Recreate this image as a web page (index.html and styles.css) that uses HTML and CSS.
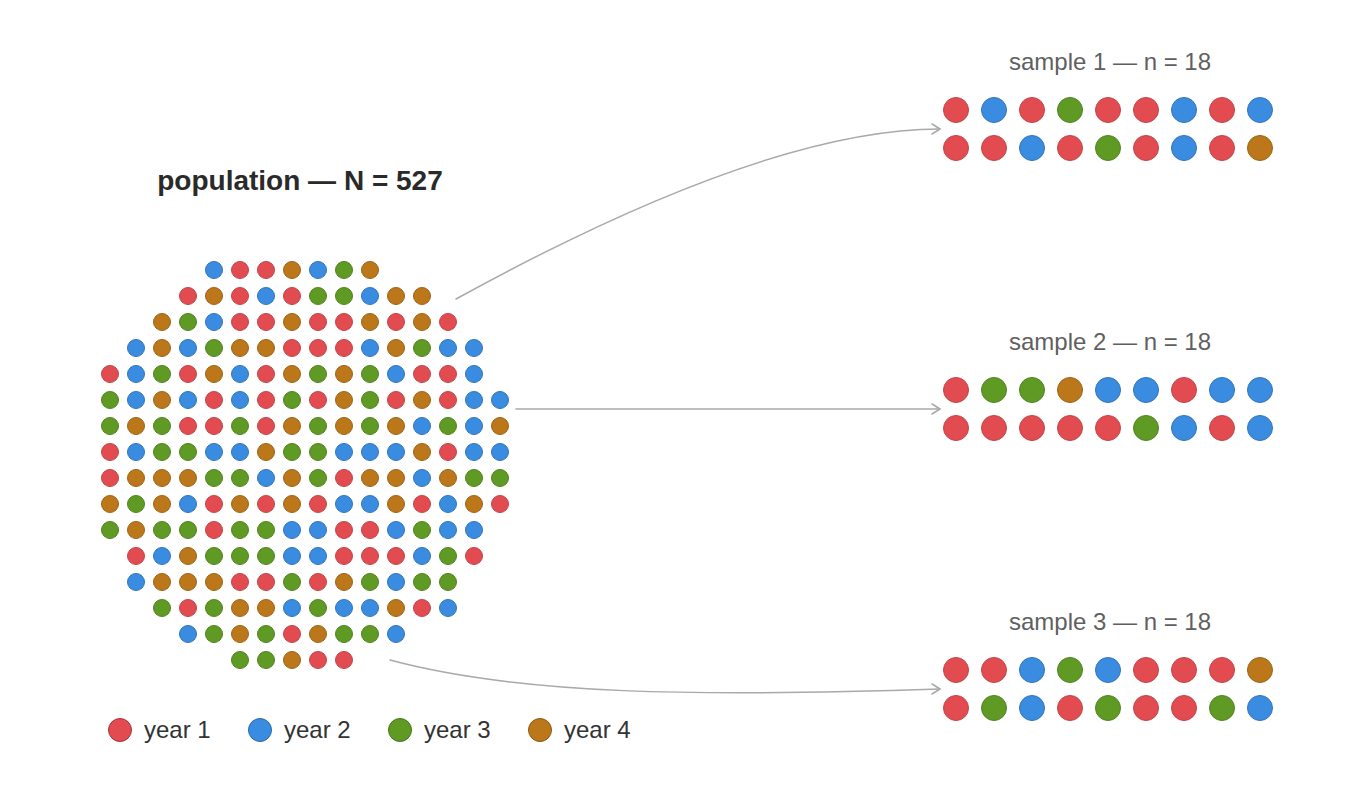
FILE: index.html
```html
<!DOCTYPE html>
<html lang="en">
<head>
<meta charset="utf-8">
<title>Sampling from a population</title>
<link rel="stylesheet" href="styles.css">
</head>
<body>
<div class="stage">
  <section class="left">
    <h1 class="title">population — N = 527</h1>
    <div class="pop">
      <div class="row o4"><i class="d y2"></i><i class="d y1"></i><i class="d y1"></i><i class="d y4"></i><i class="d y2"></i><i class="d y3"></i><i class="d y4"></i></div>
      <div class="row o3"><i class="d y1"></i><i class="d y4"></i><i class="d y1"></i><i class="d y2"></i><i class="d y1"></i><i class="d y3"></i><i class="d y3"></i><i class="d y2"></i><i class="d y4"></i><i class="d y4"></i></div>
      <div class="row o2"><i class="d y4"></i><i class="d y3"></i><i class="d y2"></i><i class="d y1"></i><i class="d y1"></i><i class="d y4"></i><i class="d y1"></i><i class="d y1"></i><i class="d y4"></i><i class="d y1"></i><i class="d y4"></i><i class="d y1"></i></div>
      <div class="row o1"><i class="d y2"></i><i class="d y4"></i><i class="d y2"></i><i class="d y3"></i><i class="d y4"></i><i class="d y4"></i><i class="d y1"></i><i class="d y1"></i><i class="d y1"></i><i class="d y2"></i><i class="d y4"></i><i class="d y3"></i><i class="d y2"></i><i class="d y2"></i></div>
      <div class="row"><i class="d y1"></i><i class="d y2"></i><i class="d y3"></i><i class="d y1"></i><i class="d y4"></i><i class="d y2"></i><i class="d y1"></i><i class="d y4"></i><i class="d y3"></i><i class="d y4"></i><i class="d y3"></i><i class="d y2"></i><i class="d y1"></i><i class="d y1"></i><i class="d y2"></i></div>
      <div class="row"><i class="d y3"></i><i class="d y2"></i><i class="d y4"></i><i class="d y2"></i><i class="d y1"></i><i class="d y2"></i><i class="d y1"></i><i class="d y3"></i><i class="d y1"></i><i class="d y4"></i><i class="d y3"></i><i class="d y1"></i><i class="d y4"></i><i class="d y1"></i><i class="d y2"></i><i class="d y2"></i></div>
      <div class="row"><i class="d y3"></i><i class="d y4"></i><i class="d y3"></i><i class="d y1"></i><i class="d y1"></i><i class="d y3"></i><i class="d y1"></i><i class="d y4"></i><i class="d y3"></i><i class="d y4"></i><i class="d y3"></i><i class="d y4"></i><i class="d y2"></i><i class="d y3"></i><i class="d y2"></i><i class="d y4"></i></div>
      <div class="row"><i class="d y1"></i><i class="d y2"></i><i class="d y3"></i><i class="d y3"></i><i class="d y2"></i><i class="d y2"></i><i class="d y4"></i><i class="d y3"></i><i class="d y3"></i><i class="d y2"></i><i class="d y2"></i><i class="d y2"></i><i class="d y4"></i><i class="d y1"></i><i class="d y2"></i><i class="d y2"></i></div>
      <div class="row"><i class="d y1"></i><i class="d y4"></i><i class="d y4"></i><i class="d y4"></i><i class="d y3"></i><i class="d y3"></i><i class="d y2"></i><i class="d y4"></i><i class="d y3"></i><i class="d y1"></i><i class="d y4"></i><i class="d y4"></i><i class="d y2"></i><i class="d y4"></i><i class="d y3"></i><i class="d y3"></i></div>
      <div class="row"><i class="d y4"></i><i class="d y3"></i><i class="d y4"></i><i class="d y2"></i><i class="d y1"></i><i class="d y4"></i><i class="d y1"></i><i class="d y4"></i><i class="d y1"></i><i class="d y2"></i><i class="d y2"></i><i class="d y4"></i><i class="d y1"></i><i class="d y2"></i><i class="d y4"></i><i class="d y1"></i></div>
      <div class="row"><i class="d y3"></i><i class="d y4"></i><i class="d y3"></i><i class="d y3"></i><i class="d y1"></i><i class="d y3"></i><i class="d y3"></i><i class="d y2"></i><i class="d y2"></i><i class="d y1"></i><i class="d y1"></i><i class="d y2"></i><i class="d y3"></i><i class="d y2"></i><i class="d y2"></i></div>
      <div class="row o1"><i class="d y1"></i><i class="d y2"></i><i class="d y4"></i><i class="d y3"></i><i class="d y3"></i><i class="d y3"></i><i class="d y2"></i><i class="d y2"></i><i class="d y1"></i><i class="d y1"></i><i class="d y1"></i><i class="d y2"></i><i class="d y3"></i><i class="d y1"></i></div>
      <div class="row o1"><i class="d y2"></i><i class="d y4"></i><i class="d y4"></i><i class="d y4"></i><i class="d y1"></i><i class="d y1"></i><i class="d y3"></i><i class="d y1"></i><i class="d y4"></i><i class="d y3"></i><i class="d y2"></i><i class="d y3"></i><i class="d y3"></i></div>
      <div class="row o2"><i class="d y3"></i><i class="d y1"></i><i class="d y3"></i><i class="d y4"></i><i class="d y4"></i><i class="d y2"></i><i class="d y3"></i><i class="d y2"></i><i class="d y2"></i><i class="d y4"></i><i class="d y1"></i><i class="d y2"></i></div>
      <div class="row o3"><i class="d y2"></i><i class="d y3"></i><i class="d y4"></i><i class="d y3"></i><i class="d y1"></i><i class="d y4"></i><i class="d y3"></i><i class="d y3"></i><i class="d y2"></i></div>
      <div class="row o5"><i class="d y3"></i><i class="d y3"></i><i class="d y4"></i><i class="d y1"></i><i class="d y1"></i></div>
    </div>
    <ul class="legend">
      <li class="item"><i class="key y1"></i><span>year 1</span></li>
      <li class="item"><i class="key y2"></i><span>year 2</span></li>
      <li class="item"><i class="key y3"></i><span>year 3</span></li>
      <li class="item"><i class="key y4"></i><span>year 4</span></li>
    </ul>
  </section>

  <section class="right">
    <div class="sample">
      <h2 class="stitle">sample 1 — n = 18</h2>
      <div class="sgrid">
        <i class="s y1"></i><i class="s y2"></i><i class="s y1"></i><i class="s y3"></i><i class="s y1"></i><i class="s y1"></i><i class="s y2"></i><i class="s y1"></i><i class="s y2"></i>
        <i class="s y1"></i><i class="s y1"></i><i class="s y2"></i><i class="s y1"></i><i class="s y3"></i><i class="s y1"></i><i class="s y2"></i><i class="s y1"></i><i class="s y4"></i>
      </div>
    </div>
    <div class="sample">
      <h2 class="stitle">sample 2 — n = 18</h2>
      <div class="sgrid">
        <i class="s y1"></i><i class="s y3"></i><i class="s y3"></i><i class="s y4"></i><i class="s y2"></i><i class="s y2"></i><i class="s y1"></i><i class="s y2"></i><i class="s y2"></i>
        <i class="s y1"></i><i class="s y1"></i><i class="s y1"></i><i class="s y1"></i><i class="s y1"></i><i class="s y3"></i><i class="s y2"></i><i class="s y1"></i><i class="s y2"></i>
      </div>
    </div>
    <div class="sample">
      <h2 class="stitle">sample 3 — n = 18</h2>
      <div class="sgrid">
        <i class="s y1"></i><i class="s y1"></i><i class="s y2"></i><i class="s y3"></i><i class="s y2"></i><i class="s y1"></i><i class="s y1"></i><i class="s y1"></i><i class="s y4"></i>
        <i class="s y1"></i><i class="s y3"></i><i class="s y2"></i><i class="s y1"></i><i class="s y3"></i><i class="s y1"></i><i class="s y1"></i><i class="s y3"></i><i class="s y2"></i>
      </div>
    </div>
  </section>

  <svg class="arrows" width="1360" height="800" viewBox="0 0 1360 800" aria-hidden="true">
    <g class="link">
      <path d="M456 299 Q765 129 940 129"/>
      <path d="M932 124 L940 129 L932 134"/>
      <path d="M516 409 L940 409"/>
      <path d="M932 404 L940 409 L932 414"/>
      <path d="M390 660 C520 695 700 697 940 689"/>
      <path d="M932 684 L940 689 L932 694"/>
    </g>
  </svg>
</div>
</body>
</html>
```

FILE: styles.css
```css
html, body {
  margin: 0;
  padding: 0;
  background: #ffffff;
}

body {
  font-family: "Liberation Sans", Arial, sans-serif;
  color: #222;
}

.stage {
  position: relative;
  width: 1360px;
  height: 800px;
  display: flex;
  overflow: hidden;
}

/* ---------- population ---------- */
.left {
  display: flex;
  flex-direction: column;
  padding-left: 101px;
  padding-top: 165px;
}

.title {
  margin: 0;
  width: 398px;
  text-align: center;
  font-size: 28px;
  line-height: 32px;
  font-weight: 700;
  color: #2a2a2a;
}

.pop {
  margin-top: 64px;
  display: flex;
  flex-direction: column;
  gap: 8px;
}

.row {
  display: flex;
  gap: 8px;
}

.o1 { margin-left: 26px; }
.o2 { margin-left: 52px; }
.o3 { margin-left: 78px; }
.o4 { margin-left: 104px; }
.o5 { margin-left: 130px; }

.d,
.s,
.key {
  display: block;
  border-radius: 50%;
  box-sizing: border-box;
  border-style: solid;
  border-width: 1px;
}

.d { width: 18px; height: 18px; }
.s { width: 26px; height: 26px; }
.key { width: 24px; height: 24px; border-width: 1.5px; }

.y1 { background: #e24b4f; border-color: #bf464a; }
.y2 { background: #3a8ce0; border-color: #3474ba; }
.y3 { background: #5e9a24; border-color: #52831f; }
.y4 { background: #bb7719; border-color: #9c6517; }

.key.y1 { border-color: #a83438; }
.key.y2 { border-color: #2a68a8; }
.key.y3 { border-color: #46751a; }
.key.y4 { border-color: #8c5a13; }

/* ---------- legend ---------- */
.legend {
  list-style: none;
  margin: 49px 0 0 7px;
  padding: 0;
  display: flex;
}

.item {
  width: 140px;
  display: flex;
  align-items: center;
  gap: 12px;
  font-size: 24px;
  line-height: 24px;
  color: #333;
}

/* ---------- samples ---------- */
.right {
  margin-left: auto;
  margin-right: 87px;
  padding-top: 48px;
  display: flex;
  flex-direction: column;
  gap: 167px;
}

.sample {
  width: 330px;
  display: flex;
  flex-direction: column;
}

.stitle {
  margin: 0 0 21px 0;
  text-align: center;
  font-size: 24px;
  line-height: 28px;
  font-weight: 400;
  color: #5f5f5f;
  padding-left: 4px;
}

.sgrid {
  display: grid;
  grid-template-columns: repeat(9, 26px);
  gap: 12px;
}

/* ---------- links ---------- */
.arrows {
  position: absolute;
  left: 0;
  top: 0;
  pointer-events: none;
}

.link path {
  fill: none;
  stroke: #a9a9a9;
  stroke-width: 1.5;
  stroke-linecap: round;
  stroke-linejoin: round;
}
```
